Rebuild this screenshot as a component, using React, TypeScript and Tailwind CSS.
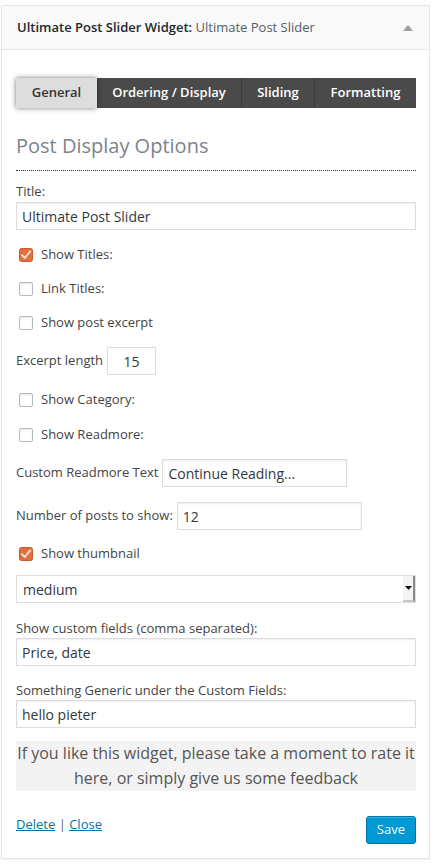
import type { ReactNode } from "react";

const FONT = { fontFamily: '"Open Sans", "Noto Sans", sans-serif' };

function Check({ checked }: { checked?: boolean }) {
  if (checked) {
    return (
      <svg width="14" height="14" viewBox="0 0 14 14" className="shrink-0">
        <rect x="0.5" y="0.5" width="13" height="13" rx="2" fill="#e2703f" stroke="#c65a30" />
        <path d="M3 7.2 L5.8 10 L11.2 3.4" fill="none" stroke="#f7d9cb" strokeWidth="2" strokeLinecap="round" strokeLinejoin="round" />
      </svg>
    );
  }
  return <span className="block w-[14px] h-[14px] shrink-0 rounded-[2px] border border-[#b4b9be] bg-white shadow-[inset_0_1px_2px_rgba(0,0,0,0.1)]" />;
}

function CheckRow({ label, checked, className }: { label: string; checked?: boolean; className: string }) {
  return (
    <div className={`flex items-center h-[18px] pl-[3px] gap-[8px] ${className}`}>
      <Check checked={checked} />
      <span>{label}</span>
    </div>
  );
}

function Field({ value, className }: { value: string; className: string }) {
  return (
    <div className={`h-[28px] border border-[#ddd] bg-white shadow-[inset_0_1px_2px_rgba(0,0,0,0.07)] flex items-center px-[5px] text-[14px] text-[#32373c] ${className}`}>
      {value}
    </div>
  );
}

function InlineRow({ label, children, className }: { label: string; children: ReactNode; className: string }) {
  return (
    <div className={`flex items-center gap-[4px] ${className}`}>
      <span>{label}</span>
      {children}
    </div>
  );
}

export default function App() {
  const tabs = ["Ordering / Display", "Sliding", "Formatting"];
  return (
    <div className="bg-white min-h-[867px] pt-[5px]" style={FONT}>
      <div className="ml-px w-[429px] h-[854px] border border-[#e5e5e5] bg-white shadow-[0_1px_1px_rgba(0,0,0,0.04)]">
        <div className="h-[44px] bg-[#f9f9f9] border-b border-[#e5e5e5] flex items-center justify-between pl-[15px] pr-[16px] text-[13px]">
          <div>
            <span className="font-semibold text-[#23282d]">Ultimate Post Slider Widget:</span>
            <span className="text-[#555d66]"> Ultimate Post Slider</span>
          </div>
          <svg width="10" height="6" viewBox="0 0 10 6" className="mt-[1px]">
            <path d="M0 6 L5 0 L10 6 Z" fill="#9aa1a7" />
          </svg>
        </div>

        <div className="pl-[14px] pr-[13px] text-[13px] text-[#444]">
          <div className="mt-[28px] flex h-[30px] w-[400px]">
            <div className="w-[81px] flex items-center justify-center bg-[#dddddd] text-[#333] font-semibold shadow-[0_0_5px_rgba(0,0,0,0.55)] relative z-10">
              General
            </div>
            {tabs.map((t, i) => (
              <div
                key={t}
                className={`flex items-center justify-center bg-[#4a4a4a] text-white font-semibold ${i === 0 ? "w-[144px]" : i === 1 ? "w-[73px] border-l border-[#3a3a3a]" : "flex-1 border-l border-[#3a3a3a]"}`}
              >
                {t}
              </div>
            ))}
          </div>

          <h3 className="mt-[24px] h-[28px] leading-[28px] text-[20px] text-[#7c838a] font-normal">Post Display Options</h3>
          <div className="mt-[10px] w-[400px] border-b border-dotted border-[#333]" />

          <div className="mt-[11px] h-[18px] leading-[18px]">Title:</div>
          <Field value="Ultimate Post Slider" className="mt-[2px] w-[400px]" />

          <CheckRow label="Show Titles:" checked className="mt-[16px]" />
          <CheckRow label="Link Titles:" className="mt-[16px]" />
          <CheckRow label="Show post excerpt" className="mt-[16px]" />

          <InlineRow label="Excerpt length" className="mt-[15px]">
            <div className="w-[49px] h-[28px] border border-[#ddd] bg-white flex items-center justify-center text-[14px] text-[#32373c]">15</div>
          </InlineRow>

          <CheckRow label="Show Category:" className="mt-[16px]" />
          <CheckRow label="Show Readmore:" className="mt-[17px]" />

          <InlineRow label="Custom Readmore Text" className="mt-[15px]">
            <Field value="Continue Reading..." className="w-[185px]" />
          </InlineRow>

          <InlineRow label="Number of posts to show:" className="mt-[15px]">
            <Field value="12" className="w-[185px]" />
          </InlineRow>

          <CheckRow label="Show thumbnail" checked className="mt-[15px]" />

          <div className="mt-[12px] w-[400px] h-[28px] border border-[#ddd] bg-white flex items-center justify-between text-[14px] text-[#32373c] relative">
            <span className="pl-[6px]">medium</span>
            <div className="h-full w-[12px] flex items-center justify-center border-r-2 border-b-2 border-r-[#8a8a8a] border-b-[#c8c8c8] bg-[#f4f4f4]">
              <svg width="7" height="4" viewBox="0 0 7 4">
                <path d="M0 0 L7 0 L3.5 4 Z" fill="#111" />
              </svg>
            </div>
          </div>

          <div className="mt-[16px] h-[18px] leading-[18px]">Show custom fields (comma separated):</div>
          <Field value="Price, date" className="mt-[1px] w-[400px]" />

          <div className="mt-[15px] h-[18px] leading-[18px]">Something Generic under the Custom Fields:</div>
          <Field value="hello pieter" className="mt-[1px] w-[400px]" />

          <div className="mt-[13px] w-[400px] h-[50px] bg-[#f3f3f3] text-[16px] leading-[25px] text-[#555] text-center">
            If you like this widget, please take a moment to rate it here, or simply give us some feedback
          </div>

          <div className="mt-[25px] flex justify-between items-start w-[400px]">
            <div className="mt-[-1px] leading-[18px]">
              <a className="text-[#0073aa] underline">Delete</a>
              <span className="text-[#666]"> | </span>
              <a className="text-[#0073aa] underline">Close</a>
            </div>
            <button className="h-[28px] px-[10px] rounded-[3px] bg-[#0099d4] border border-[#0073aa] text-white text-[13px] shadow-[inset_0_1px_0_rgba(120,200,230,0.5)]">
              Save
            </button>
          </div>
        </div>
      </div>
    </div>
  );
}
